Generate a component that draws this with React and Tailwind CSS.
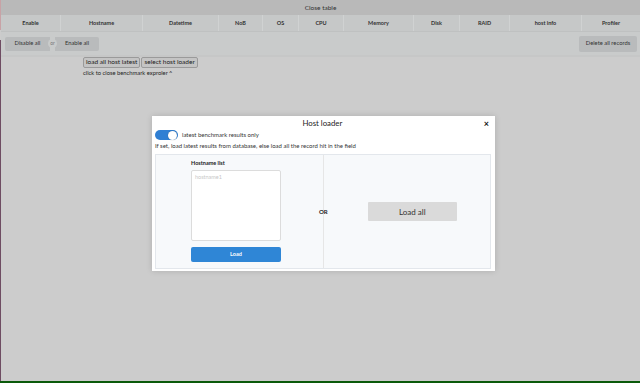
import { useState } from 'react';

const columns = [
  { name: 'Enable', w: 'w-[60px]' },
  { name: 'Hostname', w: 'w-[82px]' },
  { name: 'Datetime', w: 'w-[76px]' },
  { name: 'NoB', w: 'w-[44px]' },
  { name: 'OS', w: 'w-[36px]' },
  { name: 'CPU', w: 'w-[45px]' },
  { name: 'Memory', w: 'w-[70px]' },
  { name: 'Disk', w: 'w-[46px]' },
  { name: 'RAID', w: 'w-[50px]' },
  { name: 'host info', w: 'w-[72px]' },
  { name: 'Profiler', w: 'flex-1' },
];

const Toggle = ({ on, onChange }) => (
  <button
    onClick={() => onChange(!on)}
    className={`w-[23px] h-[10px] rounded-full flex items-center px-[1px] ${on ? 'bg-[#2f7fd3] justify-end' : 'bg-[#c4c4c4] justify-start'}`}
  >
    <span className="w-[9px] h-[9px] rounded-full bg-white shadow-[0_0_1px_rgba(0,0,0,0.4)]" />
  </button>
);

const HostLoader = () => {
  const [latestOnly, setLatestOnly] = useState(true);
  const [hosts, setHosts] = useState('');

  return (
    <div className="absolute left-[152px] top-[116px] w-[343px] h-[155px] bg-white shadow-[0_0_6px_rgba(0,0,0,0.15)] px-[3px] pt-[2px] flex flex-col">
      <div className="flex items-center h-[11px]">
        <div className="flex-1 text-center text-[7.8px] text-[#222] leading-none pl-[6px]">Host loader</div>
        <button className="text-[9px] font-bold leading-none text-[#111] mr-[3px]">×</button>
      </div>
      <div className="flex items-center gap-[4px] mt-[1px] h-[10px]">
        <Toggle on={latestOnly} onChange={setLatestOnly} />
        <span className="text-[6px] text-[#333] leading-none">latest benchmark results only</span>
      </div>
      <div className="text-[6px] text-[#333] leading-none mt-[3px]">
        If set, load latest results from database, else load all the record hit in the field
      </div>
      <div className="mt-[5px] h-[115px] w-[336px] border border-[#e3e7ec] bg-[#f7f9fb] flex">
        <div className="w-[168px] flex flex-col pl-[35px] pt-[6px] border-r border-[#e6e6e6]">
          <div className="text-[5.5px] font-bold text-[#222] leading-none">Hostname list</div>
          <textarea
            value={hosts}
            onChange={e => setHosts(e.target.value)}
            placeholder="hostname1"
            className="mt-[3px] w-[90px] h-[71px] border border-[#dcdcdc] rounded-[2px] bg-white text-[5.5px] px-[3px] py-[2px] text-[#333] placeholder:text-[#c8c8c8] outline-none resize-none"
          />
          <button className="mt-[6px] w-[90px] h-[15px] rounded-[2px] bg-[#2f86d6] text-white text-[5.5px] font-bold">Load</button>
        </div>
        <div className="flex-1 flex items-center pl-0">
          <span className="-ml-[5px] text-[6px] font-bold text-[#222]">OR</span>
          <button className="ml-[40px] w-[89px] h-[19px] bg-[#dadada] text-[8px] text-[#333] rounded-[1px]">Load all</button>
        </div>
      </div>
    </div>
  );
};

const App = () => {
  return (
    <div className="w-[640px] h-[383px] bg-[#cccccc] relative overflow-hidden flex font-['Lato',sans-serif] border-b-2 border-[#0b5a0b]">
      <div className="w-[1px] flex flex-col">
        <div className="h-[30px] bg-[#c8a2a6]" />
        <div className="h-[10px] bg-[#cccccc]" />
        <div className="flex-1 bg-[#6e4c62]" />
      </div>
      <div className="flex-1 flex flex-col">
        <div className="h-[15px] bg-[#b9b9b9] flex items-center justify-center text-[6.5px] text-[#333]">Close table</div>
        <div className="h-[17px] bg-[#c6c8c8] flex border-b border-[#bfc1c1]">
          {columns.map(c => (
            <div key={c.name} className={`${c.w} flex items-center justify-center text-[5.5px] font-bold text-[#333] border-r border-[#d0d2d2] last:border-r-0`}>
              {c.name}
            </div>
          ))}
        </div>
        <div className="h-[23px] bg-[#c9cbcb] flex items-center justify-between pl-[4px] pr-[3px]">
          <div className="flex items-center">
            <button className="h-[14px] w-[45px] bg-[#b9bbbc] rounded-l-[2px] text-[5.8px] text-[#333]">Disable all</button>
            <span className="w-[9px] h-[9px] -mx-[2px] z-10 rounded-full bg-[#c9cbcb] text-[5px] text-[#777] flex items-center justify-center">or</span>
            <button className="h-[14px] w-[44px] bg-[#b9bbbc] rounded-r-[2px] text-[5.8px] text-[#333]">Enable all</button>
          </div>
          <button className="h-[16px] w-[58px] bg-[#b9bbbc] rounded-[2px] text-[5.8px] text-[#333]">Delete all records</button>
        </div>
        <div className="h-[2px] bg-[#c6c7c7]" />
        <div className="flex flex-col pl-[82px]">
          <div className="flex gap-[1px]">
            <button className="h-[11px] px-[2px] border border-[#9a9a9a] rounded-[2px] bg-[#c4c4c4] text-[6.5px] text-[#222] leading-none">load all host latest</button>
            <button className="h-[11px] px-[2px] border border-[#9a9a9a] rounded-[2px] bg-[#c4c4c4] text-[6.5px] text-[#222] leading-none">select host loader</button>
          </div>
          <div className="text-[5.8px] text-[#222] mt-[2px] leading-none">click to close benchmark exproler ^</div>
        </div>
      </div>
      <HostLoader />
    </div>
  );
};

export default App;
